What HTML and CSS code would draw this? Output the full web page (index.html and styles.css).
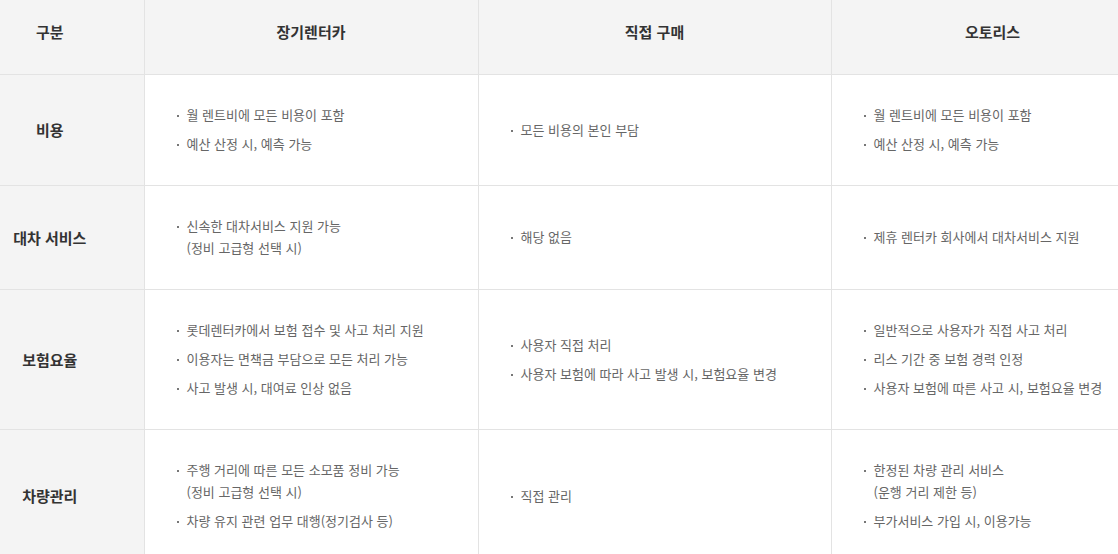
FILE: index.html
```html
<!DOCTYPE html>
<html lang="ko">
<head>
<meta charset="utf-8">
<title>비교표</title>
<link rel="stylesheet" href="styles.css">
</head>
<body>
<table class="compare">
  <colgroup>
    <col class="c-head">
    <col class="c-rent">
    <col class="c-buy">
    <col class="c-lease">
  </colgroup>
  <thead>
    <tr>
      <th class="row-head">구분</th>
      <th>장기렌터카</th>
      <th>직접 구매</th>
      <th>오토리스</th>
    </tr>
  </thead>
  <tbody>
    <tr>
      <th class="row-head">비용</th>
      <td><ul class="list"><li>월 렌트비에 모든 비용이 포함</li><li>예산 산정 시, 예측 가능</li></ul></td>
      <td><ul class="list"><li>모든 비용의 본인 부담</li></ul></td>
      <td><ul class="list"><li>월 렌트비에 모든 비용이 포함</li><li>예산 산정 시, 예측 가능</li></ul></td>
    </tr>
    <tr>
      <th class="row-head">대차 서비스</th>
      <td><ul class="list"><li>신속한 대차서비스 지원 가능<br>(정비 고급형 선택 시)</li></ul></td>
      <td><ul class="list"><li>해당 없음</li></ul></td>
      <td><ul class="list"><li>제휴 렌터카 회사에서 대차서비스 지원</li></ul></td>
    </tr>
    <tr>
      <th class="row-head">보험요율</th>
      <td><ul class="list"><li>롯데렌터카에서 보험 접수 및 사고 처리 지원</li><li>이용자는 면책금 부담으로 모든 처리 가능</li><li>사고 발생 시, 대여료 인상 없음</li></ul></td>
      <td><ul class="list"><li>사용자 직접 처리</li><li>사용자 보험에 따라 사고 발생 시, 보험요율 변경</li></ul></td>
      <td><ul class="list"><li>일반적으로 사용자가 직접 사고 처리</li><li>리스 기간 중 보험 경력 인정</li><li>사용자 보험에 따른 사고 시, 보험요율 변경</li></ul></td>
    </tr>
    <tr>
      <th class="row-head">차량관리</th>
      <td><ul class="list"><li>주행 거리에 따른 모든 소모품 정비 가능<br>(정비 고급형 선택 시)</li><li>차량 유지 관련 업무 대행(정기검사 등)</li></ul></td>
      <td><ul class="list"><li>직접 관리</li></ul></td>
      <td><ul class="list"><li>한정된 차량 관리 서비스<br>(운행 거리 제한 등)</li><li>부가서비스 가입 시, 이용가능</li></ul></td>
    </tr>
  </tbody>
</table>
</body>
</html>
```

FILE: styles.css
```css
html, body {
  margin: 0;
  padding: 0;
  background: #fff;
  overflow: hidden;
}

body {
  font-family: "Noto Sans CJK KR", "Noto Sans", sans-serif;
  color: #666;
}

.compare {
  width: 1154px;
  table-layout: fixed;
  border-collapse: collapse;
  border-spacing: 0;
}

.c-head { width: 144px; }
.c-rent { width: 334px; }
.c-buy { width: 353px; }
.c-lease { width: 323px; }

.compare th,
.compare td {
  border: 1px solid #e3e3e3;
  border-top: 0;
  vertical-align: middle;
}

.compare tr > :first-child { border-left: 0; }

.compare thead th {
  background: #f4f4f4;
  color: #333;
  font-size: 15px;
  font-weight: 700;
  line-height: 22px;
  text-align: center;
  padding: 21px 0 31px;
}

.compare tbody th.row-head {
  background: #f4f4f4;
  color: #333;
  font-size: 15px;
  font-weight: 700;
  line-height: 22px;
}

.compare .row-head {
  text-align: center;
  padding-left: 0;
  padding-right: 44px;
}

.compare td {
  padding: 29px 20px 30px 32px;
  font-size: 13px;
  line-height: 22px;
  color: #666;
}

.list {
  list-style: none;
  margin: 0;
  padding: 0;
  display: flex;
  flex-direction: column;
  gap: 7px;
}

.list li {
  position: relative;
  padding-left: 10px;
  white-space: nowrap;
}

.list li::before {
  content: "";
  position: absolute;
  left: 0;
  top: 11px;
  width: 2px;
  height: 2px;
  background: #777;
}
```
